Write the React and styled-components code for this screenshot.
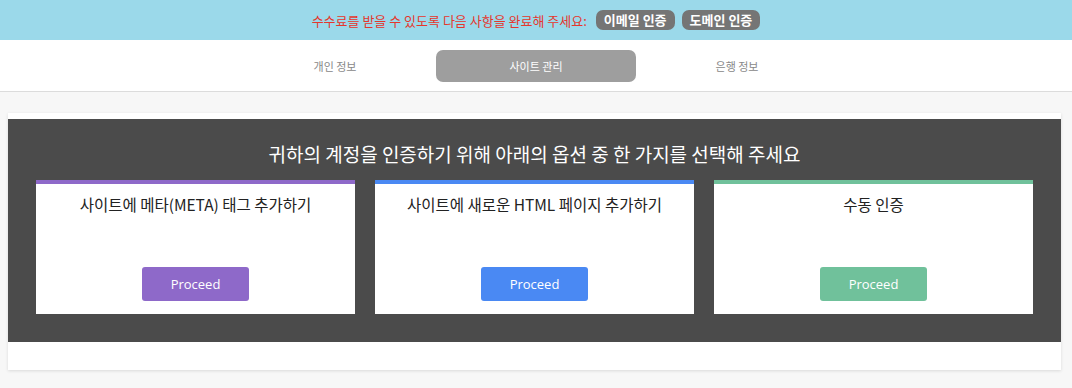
import React from "react";
import styled, { createGlobalStyle } from "styled-components";

const GlobalStyle = createGlobalStyle`
    body {
        margin: 0;
        background: #f7f7f7;
        font-family: "Noto Sans CJK KR", "Noto Sans", sans-serif;
    }
`

const tabs = ["개인 정보", "사이트 관리", "은행 정보"]

const options = [
    { title: "사이트에 메타(META) 태그 추가하기", color: "#8e69c9" },
    { title: "사이트에 새로운 HTML 페이지 추가하기", color: "#4a89f3" },
    { title: "수동 인증", color: "#70c19b" },
]

function App() {
    return (
        <>
            <GlobalStyle />
            <Banner>
                <Notice>수수료를 받을 수 있도록 다음 사항을 완료해 주세요:</Notice>
                <Badge>이메일 인증</Badge>
                <Badge>도메인 인증</Badge>
            </Banner>
            <Nav>
                {tabs.map((t, i) => (
                    <Tab key={t} active={i === 1}>{t}</Tab>
                ))}
            </Nav>
            <Page>
                <Panel>
                    <DarkBox>
                        <Heading>귀하의 계정을 인증하기 위해 아래의 옵션 중 한 가지를 선택해 주세요</Heading>
                        <Cards>
                            {options.map((o) => (
                                <Card key={o.title} color={o.color}>
                                    <CardTitle>{o.title}</CardTitle>
                                    <ProceedButton color={o.color}>Proceed</ProceedButton>
                                </Card>
                            ))}
                        </Cards>
                    </DarkBox>
                    <PanelFoot />
                </Panel>
            </Page>
        </>
    )
}

const Banner = styled.div`
    height: 40px;
    background: #9bd9ea;
    display: flex;
    align-items: center;
    justify-content: center;
    gap: 7px;
`

const Notice = styled.span`
    color: #e5362c;
    font-size: 13px;
    margin-right: 2px;
`

const Badge = styled.span`
    background: #757575;
    color: #fff;
    font-weight: 700;
    font-size: 13px;
    border-radius: 7px;
    padding: 1px 8px 2px;
    line-height: 17px;
`

const Nav = styled.div`
    height: 51px;
    background: #fff;
    border-bottom: 1px solid #dcdcdc;
    display: flex;
    justify-content: center;
    align-items: center;
    gap: 1px;
`

const Tab = styled.div`
    width: 200px;
    height: 32px;
    display: flex;
    align-items: center;
    justify-content: center;
    font-size: 11px;
    border-radius: 7px;
    color: ${(p) => (p.active ? "#fff" : "#888")};
    background: ${(p) => (p.active ? "#9e9e9e" : "transparent")};
`

const Page = styled.div`
    padding: 21px 11px 18px 8px;
`

const Panel = styled.div`
    background: #fff;
    padding-top: 6px;
    box-shadow: 0 1px 3px rgba(0, 0, 0, 0.12);
`

const DarkBox = styled.div`
    background: #4b4b4b;
    padding: 22px 28px 28px;
`

const Heading = styled.h2`
    margin: 0 0 14px;
    text-align: center;
    color: #fff;
    font-weight: 400;
    font-size: 19px;
    line-height: 25px;
`

const Cards = styled.div`
    display: grid;
    grid-template-columns: repeat(3, 1fr);
    gap: 20px;
`

const Card = styled.div`
    background: #fff;
    border-top: 4px solid ${(p) => p.color};
    height: 134px;
    display: flex;
    flex-direction: column;
    align-items: center;
    padding: 9px 0 13px;
    box-sizing: border-box;
`

const CardTitle = styled.div`
    font-size: 15.5px;
    font-weight: 400;
    color: #222;
    line-height: 22px;
`

const ProceedButton = styled.button`
    margin-top: auto;
    width: 107px;
    height: 34px;
    border: none;
    border-radius: 3px;
    background: ${(p) => p.color};
    color: #fff;
    font-family: "Open Sans", sans-serif;
    font-size: 13px;
`

const PanelFoot = styled.div`
    height: 28px;
`

export default App
